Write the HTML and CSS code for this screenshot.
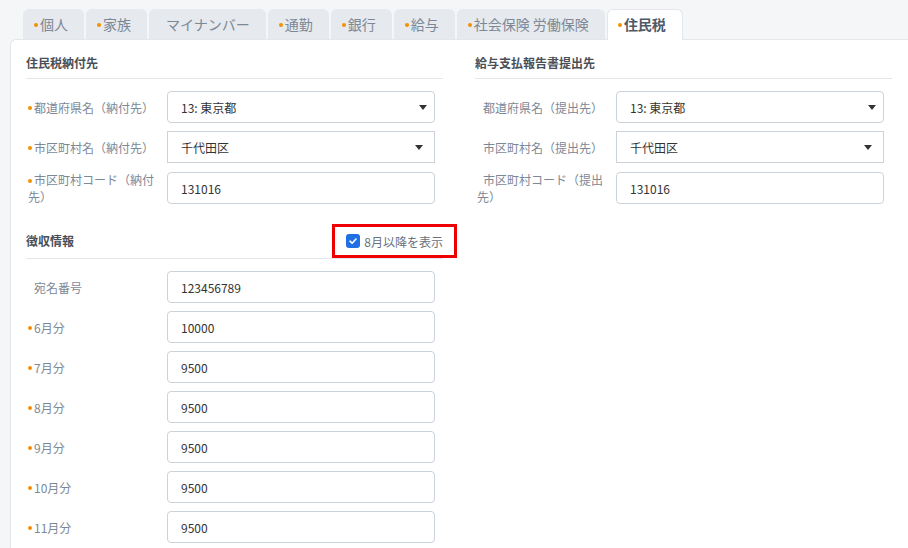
FILE: index.html
```html
<!DOCTYPE html>
<html lang="ja">
  <head>
    <meta charset="UTF-8" />
    <meta name="viewport" content="width=device-width, initial-scale=1.0" />
    <title>住民税</title>
    <link rel="stylesheet" href="styles.css">
  </head>
  <body>
    <ul class="tabs">
      <li class="tab req">個人</li>
      <li class="tab req">家族</li>
      <li class="tab">マイナンバー</li>
      <li class="tab req">通勤</li>
      <li class="tab req">銀行</li>
      <li class="tab req">給与</li>
      <li class="tab req">社会保険 労働保険</li>
      <li class="tab req active">住民税</li>
    </ul>

    <div class="panel">
      <div class="columns">
        <!-- left column -->
        <div class="column">
          <div class="section-head">
            <h2>住民税納付先</h2>
          </div>
          <div class="fields">
            <div class="row">
              <label class="req">都道府県名（納付先）</label>
              <div class="select">
                <select><option>13: 東京都</option></select>
              </div>
            </div>
            <div class="row">
              <label class="req">市区町村名（納付先）</label>
              <div class="select square">
                <select><option>千代田区</option></select>
              </div>
            </div>
            <div class="row">
              <label class="req">市区町村コード（納付先）</label>
              <input type="text" value="131016">
            </div>
          </div>

          <div class="section-head second">
            <h2>徴収情報</h2>
            <label class="check-mark">
              <span class="box">
                <svg width="10" height="10" viewBox="0 0 10 10"><path d="M2 5.2 L4.1 7.2 L8 3" fill="none" stroke="#fff" stroke-width="1.6" stroke-linecap="round" stroke-linejoin="round"/></svg>
              </span>
              8月以降を表示
            </label>
          </div>
          <div class="fields fields-tight">
            <div class="row">
              <label>宛名番号</label>
              <input type="text" value="123456789">
            </div>
            <div class="row">
              <label class="req">6月分</label>
              <input type="text" value="10000">
            </div>
            <div class="row">
              <label class="req">7月分</label>
              <input type="text" value="9500">
            </div>
            <div class="row">
              <label class="req">8月分</label>
              <input type="text" value="9500">
            </div>
            <div class="row">
              <label class="req">9月分</label>
              <input type="text" value="9500">
            </div>
            <div class="row">
              <label class="req">10月分</label>
              <input type="text" value="9500">
            </div>
            <div class="row">
              <label class="req">11月分</label>
              <input type="text" value="9500">
            </div>
          </div>
        </div>

        <!-- right column -->
        <div class="column">
          <div class="section-head">
            <h2>給与支払報告書提出先</h2>
          </div>
          <div class="fields">
            <div class="row">
              <label>都道府県名（提出先）</label>
              <div class="select">
                <select><option>13: 東京都</option></select>
              </div>
            </div>
            <div class="row">
              <label>市区町村名（提出先）</label>
              <div class="select square">
                <select><option>千代田区</option></select>
              </div>
            </div>
            <div class="row">
              <label>市区町村コード（提出先）</label>
              <input type="text" value="131016">
            </div>
          </div>
        </div>
      </div>
    </div>
  </body>
</html>
```

FILE: styles.css
```css
body {
  font-family: "Noto Sans CJK JP", "Noto Sans", sans-serif;
  background-color: #f5f6f8;
  margin: 0;
  padding: 0;
  overflow: hidden;
}

.tabs {
  display: flex;
  align-items: flex-end;
  gap: 2px;
  list-style: none;
  margin: 0;
  padding: 9px 0 0 23px;
}

.tab {
  height: 30px;
  line-height: 30px;
  padding: 0 16px 0 11px;
  font-size: 14px;
  color: #7d8896;
  background-color: #e6e9ed;
  border-radius: 6px 6px 0 0;
  white-space: nowrap;
  box-sizing: border-box;
}

.tab::before {
  content: "";
  display: inline-block;
  width: 4px;
  height: 4px;
  margin-right: 2px;
  border-radius: 50%;
  vertical-align: middle;
  position: relative;
  top: -1px;
}

.tab.req::before,
label.req::before {
  background-color: #f39200;
}

.tab.active {
  height: 31px;
  margin-bottom: -1px;
  background-color: #fff;
  border: 1px solid #e3e6ea;
  border-bottom: none;
  line-height: 29px;
  padding-left: 10px;
  font-weight: bold;
  color: #4f5a67;
  position: relative;
}

.panel {
  margin-left: 10px;
  background-color: #fff;
  border-top: 1px solid #e3e6ea;
  border-left: 1px solid #e3e6ea;
  border-top-left-radius: 6px;
  padding: 13px 16px 0 15px;
  height: 520px;
}

.columns {
  display: grid;
  grid-template-columns: 417px 417px;
  gap: 32px;
}

.section-head {
  display: flex;
  align-items: center;
  justify-content: space-between;
  border-bottom: 1px solid #e3e6ea;
  padding-bottom: 5px;
}

.section-head h2 {
  margin: 0;
  font-size: 12px;
  line-height: 20px;
  font-weight: bold;
  color: #4a4f57;
}

.section-head.second {
  margin-top: 19px;
  padding-bottom: 0;
  height: 34px;
}

.check-mark {
  display: flex;
  align-items: center;
  gap: 4px;
  height: 34px;
  box-sizing: border-box;
  border: 3px solid #ee0000;
  padding: 0 11px 0 11px;
  margin-right: -14px;
  font-size: 12px;
  color: #6a7280;
}

.check-mark .box {
  display: flex;
  align-items: center;
  justify-content: center;
  width: 14px;
  height: 14px;
  border-radius: 3px;
  background-color: #1f6fe5;
}

.fields {
  display: flex;
  flex-direction: column;
  gap: 8px;
  margin-top: 12px;
  padding-right: 8px;
}

.row {
  display: flex;
  align-items: center;
  min-height: 32px;
}

.row label {
  width: 141px;
  flex-shrink: 0;
  box-sizing: border-box;
  padding: 0 8px 0 2px;
  font-size: 12px;
  line-height: 17px;
  color: #7d8896;
}

.row label::before {
  content: "";
  display: inline-block;
  width: 4px;
  height: 4px;
  margin-right: 2px;
  border-radius: 50%;
  vertical-align: middle;
  position: relative;
  top: -1px;
}

.row input,
.row select {
  width: 100%;
  height: 32px;
  box-sizing: border-box;
  border: 1px solid #ccd2da;
  border-radius: 4px;
  padding: 0 13px;
  font-family: inherit;
  font-size: 12px;
  color: #333;
  background-color: #fff;
  outline: none;
}

.select {
  flex: 1;
  position: relative;
}

.select select {
  appearance: none;
  -webkit-appearance: none;
  display: block;
}

.select.square select {
  border-radius: 0;
}

.select::after {
  content: "";
  position: absolute;
  right: 8px;
  top: 14px;
  border-left: 4px solid transparent;
  border-right: 4px solid transparent;
  border-top: 5px solid #333;
  pointer-events: none;
}

.select.square::after {
  right: 12px;
}
```
